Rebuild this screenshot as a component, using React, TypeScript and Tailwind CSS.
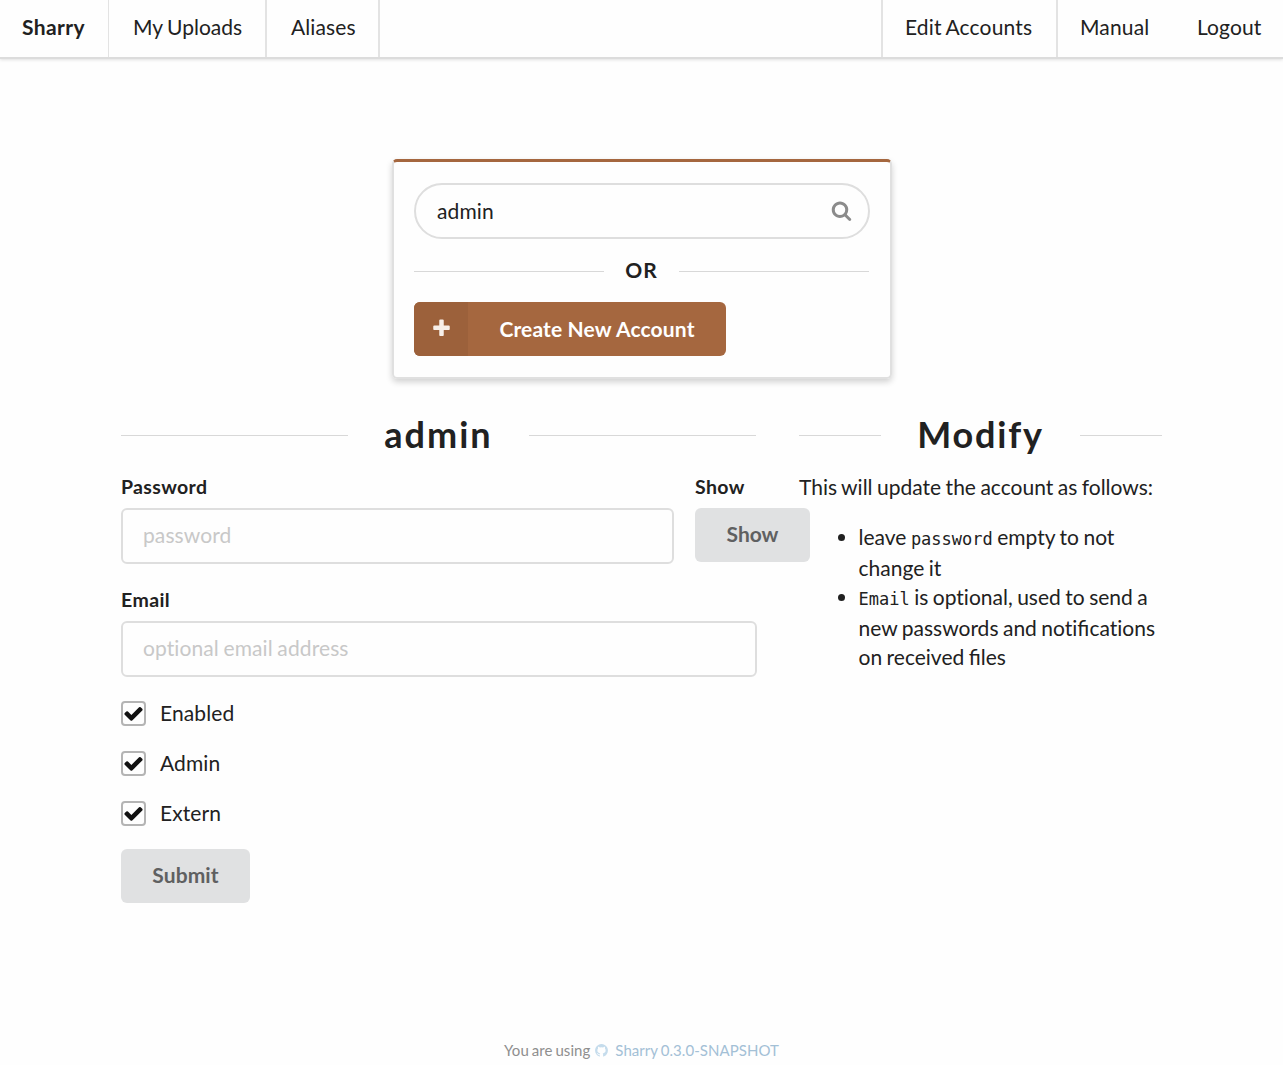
import React from "react";

const icons = {
  check:
    "M1671 566q0 40-28 68l-724 724-136 136q-28 28-68 28t-68-28l-136-136-362-362q-28-28-28-68t28-68l136-136q28-28 68-28t68 28l294 295 656-657q28-28 68-28t68 28l136 136q28 28 28 68z",
  plus: "M1600 736v192q0 40-28 68t-68 28h-416v416q0 40-28 68t-68 28h-192q-40 0-68-28t-28-68v-416h-416q-40 0-68-28t-28-68v-192q0-40 28-68t68-28h416v-416q0-40 28-68t68-28h192q40 0 68 28t28 68v416h416q40 0 68 28t28 68z",
  search:
    "M1216 832q0-185-131.5-316.5t-316.5-131.5-316.5 131.5-131.5 316.5 131.5 316.5 316.5 131.5 316.5-131.5 131.5-316.5zm512 832q0 52-38 90t-90 38q-54 0-90-38l-343-342q-179 124-399 124-143 0-273.5-55.5t-225-150-150-225-55.5-273.5 55.5-273.5 150-225 225-150 273.5-55.5 273.5 55.5 225 150 150 225 55.5 273.5q0 220-124 399l343 343q37 37 37 90z",
  github:
    "M896 128q209 0 385.5 103t279.5 279.5 103 385.5q0 251-146.5 451.5t-378.5 277.5q-27 5-40-7t-13-30q0-3 .5-76.5t.5-134.5q0-97-52-142 57-6 102.5-18t94-39 81-66.5 53-105 20.5-150.5q0-119-79-206 37-91-8-204-28-9-81 11t-92 44l-38 24q-93-26-192-26t-192 26q-16-11-42.5-27t-83.5-38.5-85-13.5q-45 113-8 204-79 87-79 206 0 85 20.5 150t52.5 105 80.5 67 94 39 102.5 18q-39 36-49 103-21 10-45 15t-57 5-65.5-21.5-55.5-62.5q-19-32-48.5-52t-49.5-24l-20-3q-21 0-29 4.5t-5 11.5 9 14 13 12l7 5q22 10 43.5 38t31.5 51l10 23q13 38 44 61.5t67 30 69.5 7 55.5-3.5l23-4q0 38 .5 88.5t.5 54.5q0 18-13 30t-40 7q-232-77-378.5-277.5t-146.5-451.5q0-209 103-385.5t279.5-279.5 385.5-103z",
};

function Icon({ name, className }: { name: keyof typeof icons; className: string }) {
  return (
    <svg viewBox="0 0 1792 1792" fill="currentColor" className={className} aria-hidden="true">
      <path d={icons[name]} />
    </svg>
  );
}

function Divider({ children, className }: { children: React.ReactNode; className: string }) {
  return (
    <div className={`flex items-center font-bold before:h-px before:flex-1 before:bg-[#d8d8d8] after:h-px after:flex-1 after:bg-[#d8d8d8] ${className}`}>
      <span className="-mt-[2px]">{children}</span>
    </div>
  );
}

function Check({ label }: { label: string }) {
  return (
    <label className="flex h-[25px] items-center gap-[14px]">
      <span className="flex size-[25px] items-center justify-center rounded-[4px] border-2 border-[#b4b4b4] text-[#101010]">
        <Icon name="check" className="size-[21px] shrink-0" />
      </span>
      <span className="-mt-[2px] tracking-[0.1px]">{label}</span>
    </label>
  );
}

// Keeps the "fi" ligature inside text whose other ligatures are off.
function Fi() {
  return <span className="[font-variant-ligatures:common-ligatures]">fi</span>;
}

function Code({ children }: { children: React.ReactNode }) {
  return <code className="font-['DejaVu_Sans_Mono',monospace] text-[17px] leading-[27px]">{children}</code>;
}

export default function App() {
  return (
    <div className="flex h-[1065px] w-[1283px] flex-col overflow-hidden bg-[#fefefe] font-['Lato',sans-serif] text-[21px] leading-[30px] text-[#212121] [word-spacing:-0.9px]">
      <nav className="flex h-[59px] shrink-0 border-b-2 border-[#dcdcdc] whitespace-nowrap shadow-[0_1px_3px_rgba(0,0,0,0.12)]">
        <a className="w-[109px] border-r border-[#e3e3e3] pt-[12px] pl-[22px] font-bold tracking-[0.4px]">Sharry</a>
        <a className="w-[158px] border-r-2 border-[#e3e3e3] pt-[12px] pl-[24px]">My Uploads</a>
        <a className="w-[113px] border-r-2 border-[#e3e3e3] pt-[12px] pl-[24px] tracking-[0.1px]">Aliases</a>
        <a className="ml-auto w-[175px] border-l-2 border-[#e3e3e3] pt-[12px] pl-[22px] tracking-[0.15px]">Edit Accounts</a>
        <a className="w-[118px] border-l-2 border-[#e3e3e3] pt-[12px] pl-[22px] tracking-[0.15px]">Manual</a>
        <a className="w-[109px] pt-[12px] pl-[23px] tracking-[0.1px]">Logout</a>
      </nav>

      <section className="mt-[100px] ml-[392px] h-[220px] w-[500px] shrink-0 rounded-[5px] border-x-2 border-t-[3px] border-b-2 border-[#e0e0e0] border-t-[#a5673f] px-[20px] pt-[21px] shadow-[0_3px_6px_rgba(0,0,0,0.18)]">
        <div className="flex h-[56px] items-center justify-between rounded-full border-2 border-[#dedede] pr-[16px] pl-[21px]">
          <span className="tracking-[0.1px]">admin</span>
          <Icon name="search" className="-mt-[2px] size-[21px] text-[#8b8b8b]" />
        </div>
        <Divider className="mt-[17px] h-[30px] w-[455px] gap-[21px] tracking-[1px]">OR</Divider>
        <button className="mt-[16px] flex h-[54px] w-[312px] items-center overflow-hidden rounded-[6px] bg-[#a5673f] font-bold text-white">
          <span className="flex h-full w-[54px] items-center justify-center bg-[#9c613b] pb-[2px] text-[#f7efe9]">
            <Icon name="plus" className="size-[21px]" />
          </span>
          <span className="flex-1 tracking-[0.15px]">Create New Account</span>
        </button>
      </section>

      <main className="mx-[121px] mt-[31px] flex gap-[43px]">
        <form className="w-[635px]">
          <Divider className="h-[50px] gap-[36px] text-[36px] tracking-[2px]">admin</Divider>
          <div className="mt-[12px] flex gap-[21px]">
            <div className="w-[553px] shrink-0">
              <div className="text-[19.5px] font-bold tracking-[0.35px]">Password</div>
              <div className="mt-[6px] flex h-[56px] items-center rounded-[6px] border-2 border-[#dedede] pb-[2px] pl-[20px] tracking-[0.1px] text-[#c8c8c8]">password</div>
            </div>
            <div className="w-[115px] shrink-0">
              <div className="text-[19.5px] font-bold tracking-[0.4px]">Show</div>
              <button type="button" className="mt-[6px] block h-[54px] w-[115px] rounded-[6px] bg-[#e0e1e2] pb-[2px] font-bold text-[#5f6061]">Show</button>
            </div>
          </div>
          <div className="mt-[21px]">
            <div className="text-[19.5px] font-bold tracking-[0.4px]">Email</div>
            <div className="mt-[6px] flex h-[56px] w-[636px] items-center rounded-[6px] border-2 border-[#dedede] pb-[2px] pl-[20px] tracking-[0.1px] text-[#c8c8c8]">optional email address</div>
          </div>
          <div className="mt-[24px] flex flex-col gap-[25px]">
            <Check label="Enabled" />
            <Check label="Admin" />
            <Check label="Extern" />
          </div>
          <button type="button" className="mt-[23px] block h-[54px] w-[129px] rounded-[6px] bg-[#e0e1e2] pb-[2px] font-bold tracking-[0.1px] text-[#5f6061]">Submit</button>
        </form>
        <aside className="w-[364px]">
          <Divider className="h-[50px] gap-[36px] text-[36px] tracking-[1.8px]">Modify</Divider>
          <p className="mt-[12px] whitespace-nowrap">This will update the account as follows:</p>
          <ul className="mt-[20px] list-disc pl-[59.5px] leading-[29px] whitespace-nowrap [font-variant-ligatures:none]">
            <li>
              leave <Code>password</Code> empty to not
              <br />
              change it
            </li>
            <li>
              <Code>Email</Code> is optional, used to send a
              <br />
              new passwords and noti<Fi />cations
              <br />
              on received <Fi />les
            </li>
          </ul>
        </aside>
      </main>

      <footer className="mt-auto mb-[3px] flex items-center justify-center text-[15px] leading-[24px] text-[#8f8f8f]">
        <span className="tracking-[0.05px]">You are using</span>
        <Icon name="github" className="mr-[6px] ml-[4px] size-[15px] text-[#c5dcec]" />
        <a className="tracking-[0.05px] text-[#a3c0d6]">Sharry 0.3.0-SNAPSHOT</a>
      </footer>
    </div>
  );
}
